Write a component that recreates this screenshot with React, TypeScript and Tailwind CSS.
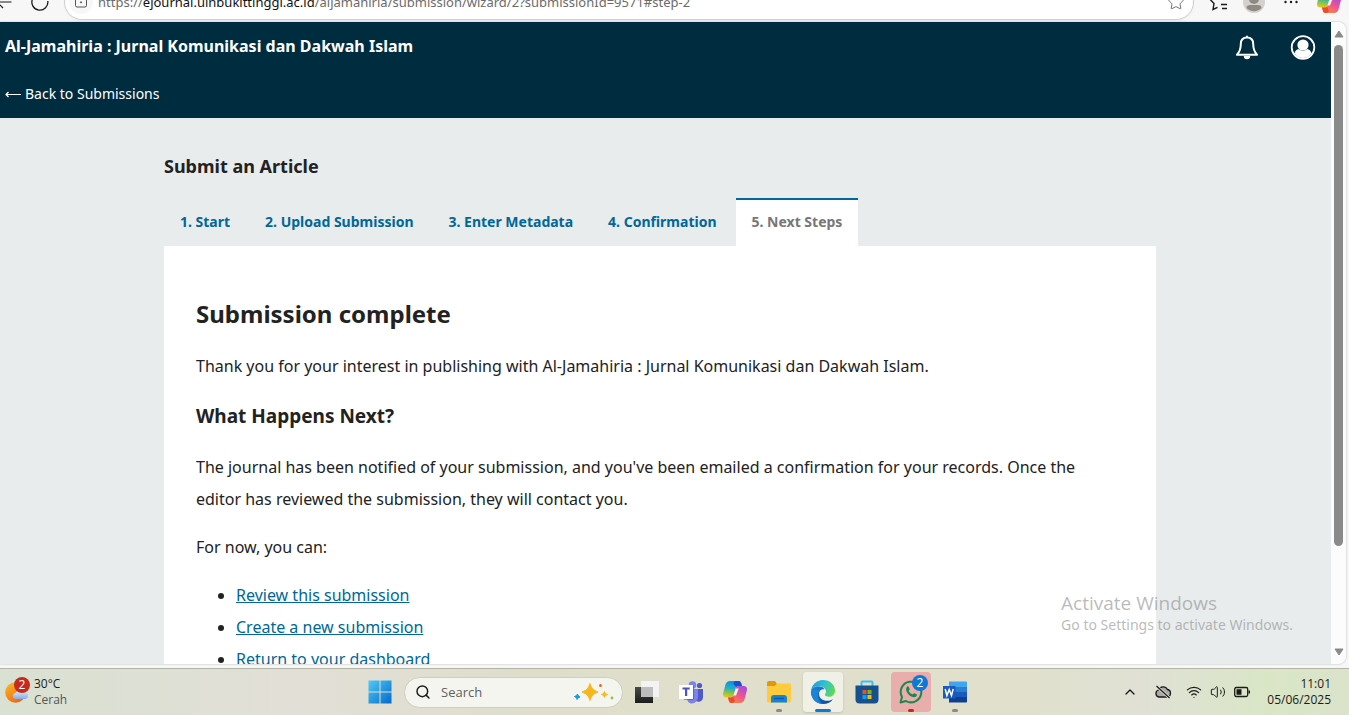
import React from "react";
import { ChevronUp, Search, Star, Wifi, Volume2 } from "lucide-react";

const tabs = ["1. Start", "2. Upload Submission", "3. Enter Metadata", "4. Confirmation", "5. Next Steps"];
const links = ["Review this submission", "Create a new submission", "Return to your dashboard"];

const CopilotIcon = ({ id }: { id: string }) => (
  <svg viewBox="0 0 24 24" className="w-6 h-6">
    <defs>
      <linearGradient id={`${id}a`} x1="0.5" y1="0" x2="0.3" y2="1">
        <stop offset="0" stopColor="#0a8fe8" />
        <stop offset="0.45" stopColor="#22b0c8" />
        <stop offset="0.75" stopColor="#8ec63f" />
        <stop offset="1" stopColor="#f2c21a" />
      </linearGradient>
      <linearGradient id={`${id}b`} x1="0.8" y1="0" x2="0.2" y2="1">
        <stop offset="0" stopColor="#a24be0" />
        <stop offset="0.5" stopColor="#ee5590" />
        <stop offset="1" stopColor="#f98a3c" />
      </linearGradient>
    </defs>
    <path d="M7 1h8.500c1.500 0 2.200 1 2.600 2.300L19 6h-3.500c-1.700 0-2.400 1-2.900 2.600L10.800 15c-.5 1.600-1.500 2.500-3.200 2.500H3.500c-3 0-4-2-3.300-4.700L2.500 4.500C3.200 2.200 4.700 1 7 1z" fill={`url(#${id}a)`} />
    <path d="M12.500 1h3.300c1.300 0 2 1 2.400 2.300L19 6h-3.500c-1 0-1.700.4-2.200 1.200L10.500 4c.4-1.800 1-3 2-3z" fill="#1b4fd0" />
    <path d="M17 23H8.500c-1.500 0-2.200-1-2.600-2.300L5 17.500h2.800c1.700 0 2.600-1 3.100-2.600l1.900-6.300C13.300 7 14.200 6 15.800 6h4.700c3 0 4 2 3.300 4.700l-2.300 8.800C20.800 21.800 19.300 23 17 23z" fill={`url(#${id}b)`} />
    <path d="M8.500 23c-1.500 0-2.200-1-2.600-2.300L5 17.500h2.800c1 0 1.700-.3 2.200-.9l2 4.400c-.5 1.300-1.500 2-3.500 2z" fill="#ef4a2d" />
    <path d="M12.800 8.600h3L13 15.500h-2.600z" fill="#fbeee4" />
  </svg>
);

const BrowserBar = () => (
  <header className="flex h-[22px] shrink-0 items-end overflow-hidden bg-[#f7f7f7] pb-1">
    <div className="flex h-8 w-full items-center">
      <button aria-label="Back" className="w-4 shrink-0">
        <svg viewBox="0 0 16 16" className="-ml-1 h-4 w-4" fill="none" stroke="#1b1b1b" strokeWidth="1.200">
          <path d="M15.500 8H1M7 2 1 8l6 6" />
        </svg>
      </button>
      <button aria-label="Refresh" className="ml-3.5 mr-3.5 shrink-0">
        <svg viewBox="0 0 20 20" className="h-5 w-5" fill="none" stroke="#1b1b1b" strokeWidth="1.300">
          <path d="M17.800 9A8 8 0 1 1 15 4M15 0v4h-4" />
        </svg>
      </button>
      <div className="flex h-9 flex-1 items-center rounded-full border border-[#cfcfcf] bg-white pl-1 pr-2 shadow-xs">
        <span className="mr-[5px] flex h-6 w-6 items-center justify-center rounded-full bg-[#f7f7f7]">
          <svg viewBox="0 0 14 16" className="h-4 w-3.5" fill="none" stroke="#555">
            <rect x="1.500" y="3.500" width="11" height="9.500" rx="1.500" />
            <path d="M4 3.500V2a3 3 0 0 1 6 0v1.500" />
            <circle cx="7" cy="8.300" r="0.600" fill="#555" />
          </svg>
        </span>
        <p className="flex-1 whitespace-nowrap text-[13px] leading-5 text-[#6b6b6b]">
          https://<span className="text-[#111]">ejournal.uinbukittinggi.ac.id</span>/aljamahiria/submission/wizard/2?submissionId=9571#step-2
        </p>
        <button aria-label="Favorite">
          <Star className="h-[18px] w-[18px] text-[#6b6b6b]" strokeWidth={1.3} />
        </button>
      </div>
      <div className="flex w-[155px] shrink-0 items-center justify-end gap-3.5">
        <button aria-label="Favorites list">
          <svg viewBox="0 0 20 20" className="h-5 w-5" fill="none" stroke="#1b1b1b" strokeWidth="1.400">
            <path d="M9 1 6.500 6.500 1 7.300l4 4.200L4 17.500l4.500-2.200M9 1l2.500 5.500M12 12.500h6M13 16.500h5" />
          </svg>
        </button>
        <button aria-label="Profile">
          <svg viewBox="0 0 22 22" className="h-[22px] w-[22px]">
            <circle cx="11" cy="11" r="11" fill="#d3d0cd" />
            <circle cx="11" cy="8" r="5" fill="#8f8984" />
            <path d="M3.500 17c0-2 1.500-3 3.500-3h8c2 0 3.500 1 3.500 3a10.500 10.500 0 0 1-15 0z" fill="#8f8984" />
          </svg>
        </button>
        <button aria-label="More" className="mx-1">
          <svg viewBox="0 0 16 4" className="h-1 w-4" fill="#1b1b1b">
            <circle cx="2.500" cy="2" r="1.200" />
            <circle cx="8" cy="2" r="1.200" />
            <circle cx="13.500" cy="2" r="1.200" />
          </svg>
        </button>
        <button aria-label="Copilot" className="mr-2">
          <CopilotIcon id="top" />
        </button>
      </div>
    </div>
  </header>
);

const SiteHeader = () => (
  <div className="flex justify-between bg-[#002c40] pl-[5px] text-white">
    <div>
      <div className="flex h-12 items-center text-base font-bold">Al-Jamahiria : Jurnal Komunikasi dan Dakwah Islam</div>
      <a href="#" className="flex h-12 items-center gap-1 text-sm">
        <svg viewBox="0 0 16 10" className="h-2.5 w-4" fill="none" stroke="currentColor" strokeWidth="1.200">
          <path d="M16 5.500H1M3.500 3 1 5.500 3.500 8" />
        </svg>
        Back to Submissions
      </a>
    </div>
    <div className="flex h-12">
      <button aria-label="Notifications" className="flex w-14 items-center justify-center pt-1">
        <svg viewBox="0 0 24 26" className="h-[26px] w-6">
          <path d="M12 2.500c-4.300 0-6.200 3-6.200 6.500 0 6-1.700 8.500-3.900 10.700h20.200c-2.200-2.200-3.900-4.700-3.900-10.700 0-3.500-1.900-6.500-6.200-6.500z" fill="none" stroke="currentColor" strokeWidth="2" strokeLinejoin="round" />
          <path d="M11 .8h2v2h-2zM8.800 21h6.400a3.200 3.200 0 0 1-6.400 0z" fill="currentColor" />
        </svg>
      </button>
      <button aria-label="User menu" className="flex w-14 items-center justify-center pt-1">
        <svg viewBox="0 0 26 26" className="h-[26px] w-[26px]">
          <circle cx="13" cy="12.500" r="11.300" fill="none" stroke="currentColor" strokeWidth="1.800" />
          <circle cx="13" cy="10" r="5.600" fill="currentColor" />
          <path d="M4.500 18.500c.8-2.800 2.200-4 4.200-4.400a6.500 6.500 0 0 0 8.600 0c2 .4 3.400 1.600 4.200 4.400a10.300 10.300 0 0 1-17 0z" fill="currentColor" />
        </svg>
      </button>
    </div>
  </div>
);

const Submission = () => (
  <main className="pr-[11px] pt-8 text-[#222]">
    <div className="mx-auto w-full max-w-[992px]">
      <h1 className="mb-4 text-lg font-bold leading-8">Submit an Article</h1>
      <div role="tablist" className="flex gap-[3px]">
        {tabs.map((tab, i) => (
          <button
            key={tab}
            role="tab"
            aria-selected={i === 4}
            className={
              i === 4
                ? "h-12 border-t-2 border-[#006798] bg-white px-4 pb-0.5 text-sm font-bold text-[#777]"
                : "h-12 border-t-2 border-transparent px-4 pb-0.5 text-sm font-bold text-[#006798]"
            }
          >
            {tab}
          </button>
        ))}
      </div>
      <div className="bg-white px-8 pb-16 pt-12 text-base leading-8">
        <h2 className="mb-4 text-2xl font-bold leading-10">Submission complete</h2>
        <p className="mb-4">Thank you for your interest in publishing with Al-Jamahiria : Jurnal Komunikasi dan Dakwah Islam.</p>
        <h3 className="mb-4 text-[19px] font-bold leading-[37px]">What Happens Next?</h3>
        <p className="mb-4">
          The journal has been notified of your submission, and you've been emailed a confirmation for your records. Once the
          editor has reviewed the submission, they will contact you.
        </p>
        <p className="mb-4">For now, you can:</p>
        <ul className="list-disc pl-10">
          {links.map((link) => (
            <li key={link}>
              <a href="#" className="text-[#006798] underline">{link}</a>
            </li>
          ))}
        </ul>
      </div>
    </div>
  </main>
);

const Scrollbar = () => (
  <div className="flex w-[15px] shrink-0 flex-col items-center bg-[#fcfcfc] py-2">
    <svg viewBox="0 0 10 8" className="h-2 w-2.5 shrink-0">
      <path d="M5 1 9 7H1z" fill="#8a8a8a" stroke="#8a8a8a" strokeLinejoin="round" />
    </svg>
    <div className="my-[7px] w-[9px] flex-1">
      <div className="h-[84%] rounded-full bg-[#8a8a8a]" />
    </div>
    <svg viewBox="0 0 10 8" className="h-2 w-2.5 shrink-0">
      <path d="M5 7 1 1h8z" fill="#8a8a8a" stroke="#8a8a8a" strokeLinejoin="round" />
    </svg>
  </div>
);

const apps = [
  {
    name: "Task View",
    icon: (
      <svg viewBox="0 0 24 24" className="h-6 w-6">
        <defs>
          <linearGradient id="tv" x1="0" y1="0" x2="0" y2="1">
            <stop offset="0" stopColor="#4a4a4a" />
            <stop offset="1" stopColor="#1c1c1c" />
          </linearGradient>
        </defs>
        <path d="M0 7h18v16H0z" fill="url(#tv)" />
        <path d="M6 1h18v16H6z" fill="#f3f3f3" />
        <path d="M6 7h12v10H6z" fill="#bdbdbd" />
      </svg>
    ),
  },
  {
    name: "Teams",
    icon: (
      <svg viewBox="0 0 24 24" className="h-6 w-6">
        <circle cx="13.500" cy="5" r="3.800" fill="#7b83eb" />
        <circle cx="20.500" cy="5.500" r="2.600" fill="#5059c9" />
        <path d="M16 9h8v8.500a4.500 4.500 0 0 1-7 3.500z" fill="#5059c9" />
        <path d="M8 9h11v8a6.300 6.300 0 0 1-6.300 6.500C10 23.500 8 21 8 18z" fill="#7b83eb" />
        <path d="M1 6h13.500v13.500H5z" fill="#3d45a8" />
        <path d="M0 5h14v14H0z" fill="#fff" />
        <path d="M3.500 7.500h7.200v2.100H8.200V16H6V9.600H3.500z" fill="#4b53bc" />
      </svg>
    ),
  },
  { name: "Copilot", icon: <CopilotIcon id="bar" /> },
  {
    name: "File Explorer",
    mark: "bg-[#8a8a80] w-1.5",
    icon: (
      <svg viewBox="0 0 24 24" className="h-6 w-6">
        <path d="M0 3a2 2 0 0 1 2-2h6l2 3v4H0z" fill="#dd9a0c" />
        <path d="M0 6h8l2-2.500h12.500c1 0 1.500.5 1.500 1.500v15.500c0 1-.5 2-1.500 2h-21C.5 22.500 0 21.500 0 20.500z" fill="#ffcb3d" />
        <path d="M4 22.500V18c0-2 1-3 3-3h10c2 0 3 1 3 3v4.500z" fill="#1583d8" />
        <path d="M7 18.500h10" stroke="#0b5ca8" strokeWidth="1.500" />
      </svg>
    ),
  },
  {
    name: "Edge",
    box: "bg-[#f3f2ea]/90 shadow-sm",
    mark: "bg-[#0f78d4] w-4",
    icon: (
      <svg viewBox="0 0 24 24" className="h-6 w-6">
        <defs>
          <linearGradient id="edgeTop" x1="0" y1="0.300" x2="1" y2="0.600">
            <stop offset="0" stopColor="#1b9de2" />
            <stop offset="0.500" stopColor="#2fc2cf" />
            <stop offset="1" stopColor="#63d850" />
          </linearGradient>
          <linearGradient id="edgeLow" x1="0" y1="0" x2="1" y2="1">
            <stop offset="0" stopColor="#1b86dc" />
            <stop offset="1" stopColor="#0c4791" />
          </linearGradient>
        </defs>
        <path d="M0 12C0 5 5.500 0 12 0c7 0 12 5 12 10.500 0 4-2.700 6.300-6 6.300-2.800 0-4.400-1-4-2.200.5-1 1-1.600 1-2.800C15 8.500 11.500 6 8 6 3.500 6 .5 9 0 12z" fill="url(#edgeTop)" />
        <path d="M0 12C.3 8.500 3.500 6.300 7.500 6.300c3 0 5 1.200 6 3-3-.8-5.500 1.500-5.500 4.500 0 4.500 4.200 7.200 8.500 7 2.500-.2 4-.8 5.500-1.600C20 22 16.500 24 12 24 5 24 0 18.500 0 12z" fill="url(#edgeLow)" />
        <path d="M8.700 10.700c-3.200 2.700-2.700 10 3.300 13.300C6 24 0 18.500 0 12c2-3 6-3 8.700-1.300z" fill="#1c83d6" />
      </svg>
    ),
  },
  {
    name: "Microsoft Store",
    icon: (
      <svg viewBox="0 0 24 24" className="h-6 w-6">
        <path d="M6.500 6V2.500c0-.6.400-1 1-1h9c.6 0 1 .4 1 1V6" fill="none" stroke="#36c1f2" strokeWidth="2" />
        <path d="M.5 5.500h23v14a4 4 0 0 1-4 4h-15a4 4 0 0 1-4-4z" fill="#17508f" />
        <path d="M7.500 10h4v4h-4z" fill="#f25022" />
        <path d="M12.500 10h4v4h-4z" fill="#7fba00" />
        <path d="M7.500 15h4v4h-4z" fill="#00a4ef" />
        <path d="M12.500 15h4v4h-4z" fill="#ffb900" />
      </svg>
    ),
  },
  {
    name: "WhatsApp",
    box: "bg-[#e9adab]",
    mark: "bg-[#c42b1c] w-1.5",
    badge: "2",
    icon: (
      <svg viewBox="0 0 24 24" className="h-6 w-6" fill="none" stroke="#168a4f">
        <path d="M1.500 22.500 3 17A10.300 10.300 0 1 1 7 21z" strokeWidth="2" strokeLinejoin="round" />
        <path d="M7.800 7c.8-1 1.800-.8 2.200.2l.7 1.800c.2.700-.9 1.300-.9 1.900.8 1.700 2 2.700 3.600 3.400.7 0 1.200-1.300 1.900-1.100l1.900.9c.9.400.9 1.400.2 2.100-2 2-5.200.6-7.300-1.300C7.700 12.600 6.200 9.500 7.800 7z" fill="#168a4f" stroke="none" />
      </svg>
    ),
  },
  {
    name: "Word",
    mark: "bg-[#8a8a80] w-1.5",
    icon: (
      <svg viewBox="0 0 24 24" className="h-6 w-6">
        <path d="M6 1.500h17c.6 0 1 .4 1 1V7H6z" fill="#41a5ee" />
        <path d="M6 7h18v5H6z" fill="#2b7cd3" />
        <path d="M6 12h18v5H6z" fill="#185abd" />
        <path d="M6 17h18v4.500c0 .6-.4 1-1 1H6z" fill="#103f91" />
        <path d="M0 6h12.500v12.500H0z" fill="#185abd" />
        <path d="m2.200 9 1.700 6.500 2.300-6 2.300 6L10.200 9" fill="none" stroke="#fff" strokeWidth="1.500" />
      </svg>
    ),
  },
];

const Taskbar = () => (
  <footer className="flex h-[47px] shrink-0 items-center justify-between border-t border-[#b3b3a6] bg-[linear-gradient(90deg,#d9e1d2_0%,#e2dfd7_22%,#dedecb_40%,#e0e0cc_75%,#e0e1d5_85%,#d9e6c6_94%,#dbe3ca_100%)] pr-[11px] font-['Open_Sans',sans-serif] text-xs leading-4 text-[#1b1b1b]">
    {/* Weather */}
    <button className="flex flex-1 basis-0 items-center gap-1 pl-1 text-left">
      <svg viewBox="0 0 26 30" className="h-[30px] w-[26px]">
        <defs>
          <linearGradient id="sun" x1="0" y1="0" x2="0.600" y2="1">
            <stop offset="0" stopColor="#f7bd2c" />
            <stop offset="1" stopColor="#f2690d" />
          </linearGradient>
          <linearGradient id="cloud" x1="0" y1="0" x2="0" y2="1">
            <stop offset="0" stopColor="#e5effc" />
            <stop offset="1" stopColor="#83ace9" />
          </linearGradient>
        </defs>
        <circle cx="11.500" cy="15.500" r="10.300" fill="url(#sun)" />
        <path d="M12 22a3 3 0 0 1-.5-6 5 5 0 0 1 8-1.500 3.800 3.800 0 0 1 1.500 7.500z" fill="url(#cloud)" />
        <circle cx="18" cy="8" r="8" fill="#c42b1c" />
        <text x="18" y="12" textAnchor="middle" fontSize="12" fill="#fff">2</text>
      </svg>
      <span>
        <span className="block">30°C</span>
        <span className="block text-[#555]">Cerah</span>
      </span>
    </button>

    {/* Pinned apps */}
    <div className="flex items-center gap-1">
      <button aria-label="Start" className="flex h-10 w-10 items-center justify-center">
        <svg viewBox="0 0 24 24" className="h-6 w-6">
          <defs>
            <linearGradient id="win" x1="0" y1="0" x2="1" y2="1">
              <stop offset="0" stopColor="#4fcbf8" />
              <stop offset="1" stopColor="#0569c8" />
            </linearGradient>
          </defs>
          <path d="M.5.5h11v11H.5zM12.500.5h11v11h-11zM.5 12.500h11v11H.5zM12.500 12.500h11v11h-11z" fill="url(#win)" />
        </svg>
      </button>
      <label className="flex h-[31px] w-[219px] items-center rounded-full border border-[#cfcfbf] bg-[#f5f5ef] pl-2.5 pr-2">
        <Search className="h-4 w-4 shrink-0" strokeWidth={2.2} />
        <input type="text" placeholder="Search" aria-label="Search" className="ml-2.5 w-full min-w-0 bg-transparent text-[13px] outline-none placeholder:text-[#606060]" />
        <svg viewBox="0 0 40 18" className="h-[18px] w-10 shrink-0">
          <path d="M16 .5c1.800 5 3 6.500 8 8.500-5 2-6.200 3.500-8 8.500-1.800-5-3-6.500-8-8.500 5-2 6.200-3.500 8-8.500z" fill="#f5b81c" stroke="#f5b81c" />
          <path d="M30.500 7.500c.8 2.500 1.300 3 4 4-2.700 1-3.200 1.500-4 4-.8-2.500-1.300-3-4-4 2.700-1 3.200-1.500 4-4z" fill="#f6bd27" />
          <path d="M3.500 11c.5 1.500 1 2 2.500 3-1.500.5-2 1-3 2.500-.5-1.500-1-2-2.500-3 1.500-.5 2-1 3-2.500z" fill="#1698e8" stroke="#1698e8" />
          <circle cx="26.500" cy="2.500" r="1.500" fill="#ef6237" />
          <circle cx="38" cy="15" r="1.400" fill="#8cc152" />
        </svg>
      </label>
      {apps.map((app) => (
        <button key={app.name} aria-label={app.name} className={`relative flex h-10 w-10 items-center justify-center rounded ${app.box ?? ""}`}>
          {app.icon}
          {app.badge && (
            <span className="absolute right-[3px] top-[3px] flex h-4 w-4 items-center justify-center rounded-full bg-[#0f78d4] text-white">
              {app.badge}
            </span>
          )}
          {app.mark && <span className={`absolute bottom-0 h-[3px] rounded-full ${app.mark}`} />}
        </button>
      ))}
    </div>

    {/* System tray */}
    <div className="flex flex-1 basis-0 items-center justify-end pr-[7px]">
      <button aria-label="Show hidden icons" className="mr-4">
        <ChevronUp className="h-4 w-4" strokeWidth={2} />
      </button>
      <svg viewBox="0 0 18 16" className="mr-3.5 h-4 w-[18px]">
        <path d="M5 13a3.600 3.600 0 0 1-.5-7 5 5 0 0 1 9-.5A3.800 3.800 0 0 1 13 13z" fill="#aaa9a4" stroke="#1b1b1b" strokeWidth="1.300" />
        <path d="m2.500 2 13 12" stroke="#e2e2d3" strokeWidth="3" />
        <path d="m2.500 2 13 12" stroke="#1b1b1b" strokeWidth="1.300" />
      </svg>
      <button aria-label="Network, volume and battery" className="mr-4 flex items-center gap-2">
        <Wifi className="h-4 w-4" strokeWidth={1.8} />
        <Volume2 className="h-4 w-4" strokeWidth={1.5} />
        <svg viewBox="0 0 17 12" className="h-3 w-[17px]">
          <rect x="0.700" y="1.500" width="13" height="9" rx="1.500" fill="none" stroke="#1b1b1b" strokeWidth="1.300" />
          <path d="M2.500 3.200h5v5.600h-5zM14.500 4.500h1.500v3h-1.500z" fill="#1b1b1b" />
        </svg>
      </button>
      <button className="text-right">
        <span className="block">11:01</span>
        <span className="block">05/06/2025</span>
      </button>
    </div>
  </footer>
);

const App = () => {
  return (
    <div className="flex h-screen flex-col overflow-hidden bg-[#f7f7f7] font-['Noto_Sans',sans-serif]">
      <BrowserBar />
      <div className="mr-[3px] flex min-h-0 flex-1 overflow-hidden rounded-r-lg shadow-[0_0_2px_#aaa]">
        <div className="min-w-0 flex-1 overflow-hidden bg-[#e8eced]">
          <SiteHeader />
          <Submission />
        </div>
        <Scrollbar />
      </div>
      <div className="h-1 shrink-0" />
      <Taskbar />

      {/* Activation watermark */}
      <div className="pointer-events-none absolute bottom-20 right-14 text-[#8c8c8c]/60">
        <p className="font-['Open_Sans',sans-serif] text-[19px] leading-6">Activate Windows</p>
        <p className="text-sm leading-5">Go to Settings to activate Windows.</p>
      </div>
    </div>
  );
};

export default App;
